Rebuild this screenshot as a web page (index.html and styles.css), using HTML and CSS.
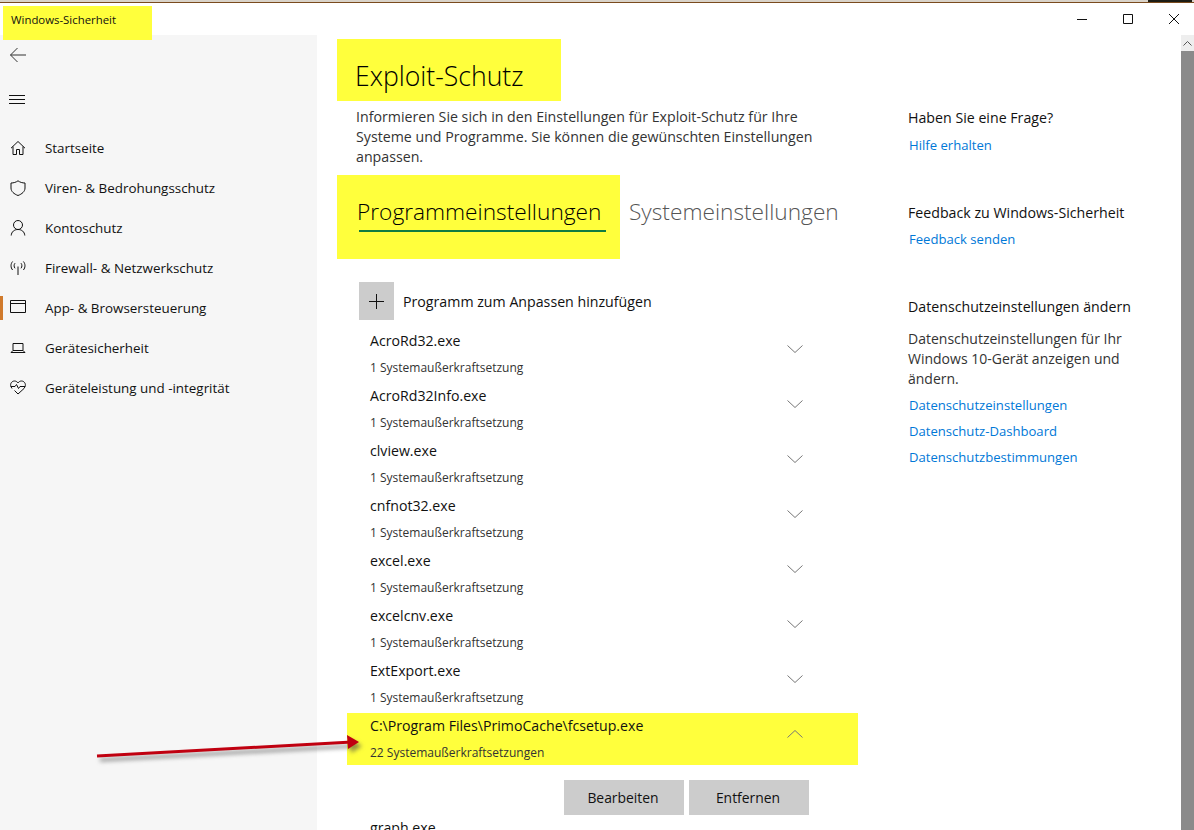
FILE: index.html

```html
<!DOCTYPE html>
<html lang="de">
<head>
  <meta charset="UTF-8">
  <title>Windows-Sicherheit</title>
  <link rel="stylesheet" href="styles.css">
</head>
<body>

  <div class="top-strip"><div class="top-strip-dark"></div></div>

  <div class="titlebar">
    <div class="app-title">Windows-Sicherheit</div>
    <div class="win-controls">
      <svg class="win-btn" viewBox="0 0 10 10"><path d="M0 5.5H10"/></svg>
      <svg class="win-btn" viewBox="0 0 10 10"><path d="M.5 .5H9.5V9.5H.5Z"/></svg>
      <svg class="win-btn" viewBox="0 0 10 10"><path d="M0 0L10 10M10 0L0 10"/></svg>
    </div>
  </div>

  <div class="window">
    <div class="sidebar">
      <div class="side-icon back">
        <svg width="18" height="16" viewBox="0 0 18 16"><path d="M17 8H1.5M8.5 1L1.5 8L8.5 15"/></svg>
      </div>
      <div class="side-icon burger">
        <svg width="16" height="10" viewBox="0 0 16 10"><path d="M0 .5H16M0 4.5H16M0 8.5H16"/></svg>
      </div>
      <div class="nav">
        <div class="nav-item">
          <svg viewBox="0 0 16 16"><path d="M1 8.2L8 1.5L15 8.2M3 6.5V14.5H6.5V9.5H9.5V14.5H13V6.5"/></svg>
          Startseite
        </div>
        <div class="nav-item">
          <svg viewBox="0 0 16 16"><path d="M8 .8C6 2.3 3.6 3 1 3V8C1 11.5 4 14 8 15.5C12 14 15 11.5 15 8V3C12.4 3 10 2.3 8 .8Z"/></svg>
          Viren- &amp; Bedrohungsschutz
        </div>
        <div class="nav-item">
          <svg viewBox="0 0 16 16"><circle cx="8" cy="5" r="4.5"/><path d="M1.2 15.5C1.5 11.8 4.2 9.5 8 9.5C11.8 9.5 14.5 11.8 14.8 15.5"/></svg>
          Kontoschutz
        </div>
        <div class="nav-item">
          <svg viewBox="0 0 16 16"><path d="M8 6.5V15M2.6 1.5C.5 4 .5 7.5 2.6 10M13.4 1.5C15.5 4 15.5 7.5 13.4 10M5 3.2C3.8 4.8 3.8 6.7 5 8.3M11 3.2C12.2 4.8 12.2 6.7 11 8.3"/></svg>
          Firewall- &amp; Netzwerkschutz
        </div>
        <div class="nav-item active">
          <svg viewBox="0 0 16 16"><path d="M.5 .5H15.5V12.5H.5ZM.5 3.5H15.5"/></svg>
          App- &amp; Browsersteuerung
        </div>
        <div class="nav-item">
          <svg viewBox="0 0 16 16"><path d="M3 3.5H13V10.5H3ZM1 12.5H15L13 10.5M1 12.5L3 10.5"/></svg>
          Gerätesicherheit
        </div>
        <div class="nav-item">
          <svg viewBox="0 0 16 16"><path d="M2 8.5L.9 6.5C-.2 3.5 2 1 4.5 1C6 1 7.2 1.8 8 3C8.8 1.8 10 1 11.5 1C14 1 16.2 3.5 15.1 6.5L14 8.5L8 14L4.5 10.5M.8 6.5H5L6.5 4.5L8.5 8.5L10 6.5H15.2"/></svg>
          Geräteleistung und -integrität
        </div>
      </div>
    </div>

    <div class="main">
      <div class="page-title"><h1>Exploit-Schutz</h1></div>
      <p class="intro">Informieren Sie sich in den Einstellungen für Exploit-Schutz für Ihre<br>Systeme und Programme. Sie können die gewünschten Einstellungen<br>anpassen.</p>

      <div class="tabs">
        <div class="tab tab-active"><span>Programmeinstellungen</span></div>
        <div class="tab">Systemeinstellungen</div>
      </div>

      <div class="add-row">
        <div class="add-btn"><svg width="15" height="15" viewBox="0 0 15 15"><path d="M7.5 0V15M0 7.5H15"/></svg></div>
        <span>Programm zum Anpassen hinzufügen</span>
      </div>

      <div class="prog">
        <div><div class="prog-name">AcroRd32.exe</div><div class="prog-sub">1 Systemaußerkraftsetzung</div></div>
        <svg class="chev" viewBox="0 0 16 8"><path d="M.5 .5L8 7.5L15.5 .5"/></svg>
      </div>
      <div class="prog">
        <div><div class="prog-name">AcroRd32Info.exe</div><div class="prog-sub">1 Systemaußerkraftsetzung</div></div>
        <svg class="chev" viewBox="0 0 16 8"><path d="M.5 .5L8 7.5L15.5 .5"/></svg>
      </div>
      <div class="prog">
        <div><div class="prog-name">clview.exe</div><div class="prog-sub">1 Systemaußerkraftsetzung</div></div>
        <svg class="chev" viewBox="0 0 16 8"><path d="M.5 .5L8 7.5L15.5 .5"/></svg>
      </div>
      <div class="prog">
        <div><div class="prog-name">cnfnot32.exe</div><div class="prog-sub">1 Systemaußerkraftsetzung</div></div>
        <svg class="chev" viewBox="0 0 16 8"><path d="M.5 .5L8 7.5L15.5 .5"/></svg>
      </div>
      <div class="prog">
        <div><div class="prog-name">excel.exe</div><div class="prog-sub">1 Systemaußerkraftsetzung</div></div>
        <svg class="chev" viewBox="0 0 16 8"><path d="M.5 .5L8 7.5L15.5 .5"/></svg>
      </div>
      <div class="prog">
        <div><div class="prog-name">excelcnv.exe</div><div class="prog-sub">1 Systemaußerkraftsetzung</div></div>
        <svg class="chev" viewBox="0 0 16 8"><path d="M.5 .5L8 7.5L15.5 .5"/></svg>
      </div>
      <div class="prog">
        <div><div class="prog-name">ExtExport.exe</div><div class="prog-sub">1 Systemaußerkraftsetzung</div></div>
        <svg class="chev" viewBox="0 0 16 8"><path d="M.5 .5L8 7.5L15.5 .5"/></svg>
      </div>
      <div class="prog prog-open">
        <div><div class="prog-name">C:\Program Files\PrimoCache\fcsetup.exe</div><div class="prog-sub">22 Systemaußerkraftsetzungen</div></div>
        <svg class="chev" viewBox="0 0 16 8"><path d="M.5 7.5L8 .5L15.5 7.5"/></svg>
      </div>
      <div class="prog-actions">
        <button>Bearbeiten</button>
        <button>Entfernen</button>
      </div>
      <div class="prog">
        <div><div class="prog-name">graph.exe</div></div>
      </div>
    </div>

    <div class="aside">
      <div class="aside-block">
        <h3>Haben Sie eine Frage?</h3>
        <a>Hilfe erhalten</a>
      </div>
      <div class="aside-block">
        <h3>Feedback zu Windows-Sicherheit</h3>
        <a>Feedback senden</a>
      </div>
      <div class="aside-block">
        <h3>Datenschutzeinstellungen ändern</h3>
        <p>Datenschutzeinstellungen für Ihr<br>Windows 10-Gerät anzeigen und<br>ändern.</p>
        <a>Datenschutzeinstellungen</a>
        <a>Datenschutz-Dashboard</a>
        <a>Datenschutzbestimmungen</a>
      </div>
    </div>

    <div class="scrollbar">
      <div class="scroll-up"><svg width="9" height="5" viewBox="0 0 9 5"><path d="M.5 4.5L4.5 .5L8.5 4.5"/></svg></div>
      <div class="scroll-thumb"></div>
    </div>
  </div>

  <!-- red annotation arrow drawn on top of the screenshot -->
  <svg class="arrow" width="280" height="40" viewBox="0 0 280 40">
    <path class="arrow-line" d="M7 26L262 12"/>
    <path class="arrow-head" d="M257 5L269 12L258 19Z"/>
  </svg>

</body>
</html>
```

FILE: styles.css

```css
html, body {
  margin: 0;
  padding: 0;
  height: 830px;
  overflow: hidden;
}
body {
  background: #fff;
  color: #111;
  font-family: "Open Sans", "Noto Sans", sans-serif;
  font-size: 13px;
  display: flex;
  flex-direction: column;
}
h1, h3, p {
  margin: 0;
  font-weight: normal;
}
svg path, svg circle {
  fill: none;
  stroke: #111;
  stroke-width: 1;
}

.top-strip {
  height: 2px;
  flex: none;
  background: #d9d3c9;
  border-bottom: 1px solid #7a4b1e;
  display: flex;
  justify-content: flex-end;
  padding-right: 2px;
}
.top-strip-dark {
  width: 44px;
  background: #1c1c14;
}

.titlebar {
  height: 32px;
  flex: none;
  display: flex;
  justify-content: space-between;
  position: relative;
  z-index: 1;
}
.app-title {
  background: #ffff3c;
  margin: 3px 0 -5px 3px;
  width: 141px;
  padding-left: 8px;
  font-size: 11.4px;
  line-height: 28px;
  height: 34px;
}
.win-controls {
  display: flex;
  gap: 36px;
  padding: 11px 15px 0 0;
}
.win-btn {
  width: 10px;
  height: 10px;
}

.window {
  flex: 1;
  display: flex;
  min-height: 0;
}

.sidebar {
  width: 317px;
  flex: none;
  background: #f6f6f6;
}
.side-icon {
  height: 20px;
  padding-left: 9px;
  display: flex;
  align-items: center;
}
.back {
  margin-top: 10px;
}
.back path {
  stroke: #333;
}
.burger {
  margin-top: 25px;
}
.nav {
  margin-top: 18px;
}
.nav-item {
  height: 40px;
  display: flex;
  align-items: center;
  gap: 19px;
  padding-left: 10px;
  font-size: 13.4px;
}
.nav-item svg {
  width: 16px;
  height: 16px;
  flex: none;
}
.nav-item.active {
  border-left: 3px solid #d07a2c;
  padding-left: 7px;
  height: 24px;
  margin: 8px 0;
}

.main {
  width: 591px;
  flex: none;
  padding-left: 20px;
  box-sizing: border-box;
}
.page-title {
  width: 224px;
  height: 62px;
  margin-top: 4px;
  background: #ffff3c;
  padding-left: 18px;
  box-sizing: border-box;
}
.page-title h1 {
  font-size: 26.6px;
  font-weight: 300;
  line-height: 74px;
  color: #000;
}
.intro {
  margin: 6px 0 0 19px;
  font-size: 14.2px;
  line-height: 20px;
  color: #333;
  white-space: nowrap;
}
.tabs {
  display: flex;
  align-items: flex-start;
  margin-top: 8px;
  font-size: 22.7px;
  font-weight: 300;
  color: #555;
}
.tab {
  line-height: 40px;
  padding-left: 9px;
  white-space: nowrap;
  margin-top: 17px;
}
.tab-active {
  width: 283px;
  height: 84px;
  box-sizing: border-box;
  margin-top: 0;
  padding: 17px 0 0 20px;
  background: #ffff3c;
  color: #000;
}
.tab-active span {
  display: block;
  width: 247px;
  height: 38px;
  margin-left: 2px;
  text-indent: -2px;
  border-bottom: 2px solid #107c41;
}
.add-row {
  display: flex;
  align-items: center;
  gap: 9px;
  margin: 23px 0 8px 22px;
  font-size: 14.2px;
}
.add-btn {
  width: 35px;
  height: 38px;
  background: #ccc;
  display: flex;
  align-items: center;
  justify-content: center;
}
.add-btn svg {
  margin-top: 1px;
}
.prog {
  width: 511px;
  height: 55px;
  margin-left: 10px;
  padding: 0 55px 0 23px;
  box-sizing: border-box;
  display: flex;
  justify-content: space-between;
}
.prog-name {
  font-size: 14.15px;
  line-height: 26px;
}
.prog-sub {
  font-size: 12px;
  line-height: 26px;
  padding-top: 1px;
  color: #333;
}
.chev {
  width: 16px;
  height: 8px;
  margin-top: 17px;
  flex: none;
}
.chev path {
  stroke: #777;
}
.prog-open {
  height: 52px;
  background: #ffff3c;
}
.prog-actions {
  display: flex;
  gap: 5px;
  margin: 15px 0 0 227px;
}
.prog-actions button {
  width: 120px;
  height: 35px;
  border: 0;
  padding: 0 2px 0 0;
  background: #ccc;
  color: #111;
  font-family: inherit;
  font-size: 13.9px;
}

.aside {
  flex: 1;
  padding-top: 71px;
}
.aside-block {
  margin-bottom: 43px;
}
.aside h3 {
  font-size: 14.2px;
  line-height: 24px;
}
.aside p {
  font-size: 14px;
  line-height: 20px;
  color: #333;
  margin-top: 10px;
  margin-bottom: 3px;
}
.aside a {
  display: block;
  color: #0078d7;
  font-size: 13.1px;
  line-height: 26px;
  margin-left: 1px;
}
.aside h3 + a {
  margin-top: 1px;
}
.aside-block:first-child h3 + a {
  margin-top: 2px;
}

.scrollbar {
  width: 13px;
  flex: none;
  display: flex;
  flex-direction: column;
}
.scroll-up {
  height: 16px;
  background: #eee;
  display: flex;
  align-items: center;
  justify-content: center;
}
.scroll-up path {
  stroke: #555;
}
.scroll-thumb {
  flex: 1;
  background: #8a8a8a;
}

.arrow {
  position: absolute;
  left: 90px;
  top: 730px;
  overflow: visible;
  filter: drop-shadow(3px 4px 2px rgba(70, 70, 70, .6));
}
.arrow .arrow-line {
  stroke: #c00010;
  stroke-width: 3;
}
.arrow .arrow-head {
  fill: #c00010;
  stroke: none;
}
```
